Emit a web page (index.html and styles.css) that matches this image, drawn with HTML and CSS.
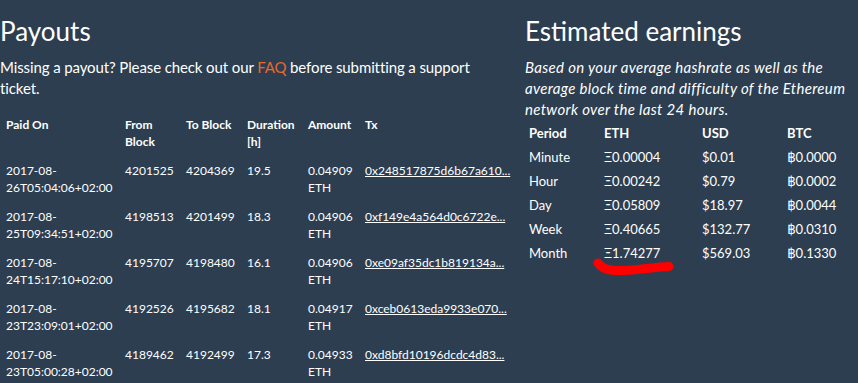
FILE: index.html
```html
<!DOCTYPE html>
<html>
<head>
<meta charset="utf-8">
<link rel="stylesheet" href="styles.css">
</head>
<body>
<div class="page">
  <section class="col col-left">
    <h2 class="title">Payouts</h2>
    <p class="lead">Missing a payout? Please check out our <a class="faq" href="#">FAQ</a> before submitting a support ticket.</p>
    <table class="payouts">
      <colgroup>
        <col class="c-date"><col class="c-num"><col class="c-num"><col class="c-num"><col class="c-amt"><col class="c-tx">
      </colgroup>
      <thead>
        <tr><th>Paid On</th><th>From Block</th><th>To Block</th><th>Duration [h]</th><th>Amount</th><th>Tx</th></tr>
      </thead>
      <tbody>
        <tr><td>2017-08-<wbr>26T05:04:06+02:00</td><td>4201525</td><td>4204369</td><td>19.5</td><td>0.04909 ETH</td><td><a class="tx" href="#">0x248517875d6b67a610...</a></td></tr>
        <tr><td>2017-08-<wbr>25T09:34:51+02:00</td><td>4198513</td><td>4201499</td><td>18.3</td><td>0.04906 ETH</td><td><a class="tx" href="#">0xf149e4a564d0c6722e...</a></td></tr>
        <tr><td>2017-08-<wbr>24T15:17:10+02:00</td><td>4195707</td><td>4198480</td><td>16.1</td><td>0.04906 ETH</td><td><a class="tx" href="#">0xe09af35dc1b819134a...</a></td></tr>
        <tr><td>2017-08-<wbr>23T23:09:01+02:00</td><td>4192526</td><td>4195682</td><td>18.1</td><td>0.04917 ETH</td><td><a class="tx" href="#">0xceb0613eda9933e070...</a></td></tr>
        <tr><td>2017-08-<wbr>23T05:00:28+02:00</td><td>4189462</td><td>4192499</td><td>17.3</td><td>0.04933 ETH</td><td><a class="tx" href="#">0xd8bfd10196dcdc4d83...</a></td></tr>
      </tbody>
    </table>
  </section>
  <section class="col col-right">
    <h2 class="title">Estimated earnings</h2>
    <p class="note">Based on your average hashrate as well as the average block time and difficulty of the Ethereum network over the last 24 hours.</p>
    <div class="earn-wrap">
      <table class="earnings">
        <colgroup><col class="e-per"><col class="e-eth"><col class="e-usd"><col class="e-btc"></colgroup>
        <thead><tr><th>Period</th><th>ETH</th><th>USD</th><th>BTC</th></tr></thead>
        <tbody>
          <tr><td>Minute</td><td>Ξ0.00004</td><td>$0.01</td><td>฿0.0000</td></tr>
          <tr><td>Hour</td><td>Ξ0.00242</td><td>$0.79</td><td>฿0.0002</td></tr>
          <tr><td>Day</td><td>Ξ0.05809</td><td>$18.97</td><td>฿0.0044</td></tr>
          <tr><td>Week</td><td>Ξ0.40665</td><td>$132.77</td><td>฿0.0310</td></tr>
          <tr><td>Month</td><td>Ξ1.74277</td><td>$569.03</td><td>฿0.1330</td></tr>
        </tbody>
      </table>
      <svg class="scribble" width="90" height="26" viewBox="0 0 90 26">
        <path d="M5 7 C 9 13, 16 15, 30 14.5 C 45 14, 62 11, 76 10.5" fill="none" stroke="#ff0000" stroke-width="9" stroke-linecap="round" stroke-linejoin="round"/>
      </svg>
    </div>
  </section>
</div>
</body>
</html>
```
FILE: styles.css
```css
html, body {
  margin: 0;
  padding: 0;
  background: #2c3e50;
}
body {
  font-family: Lato, "Open Sans", "DejaVu Sans", sans-serif;
  color: #ffffff;
  font-size: 15px;
  line-height: 1.42857;
  overflow: hidden;
}
.page {
  display: grid;
  grid-template-columns: 515px 1fr;
  column-gap: 10px;
  padding-top: 17px;
}
.title {
  font-size: 26px;
  font-weight: 400;
  line-height: 1.1;
  margin: 0 0 11px 0;
}
.lead {
  margin: 0 0 11px 0;
  max-width: 485px;
  letter-spacing: -0.11px;
}
.faq {
  color: #e8692c;
  text-decoration: none;
}
.note {
  margin: 0;
  font-style: italic;
  letter-spacing: 0.32px;
}
table {
  border-collapse: collapse;
  border-spacing: 0;
}
.payouts {
  table-layout: fixed;
  width: 515px;
  font-size: 12px;
  line-height: 17px;
}
.c-date { width: 119px; }
.c-num { width: 61px; }
.c-amt { width: 57px; }
.payouts th,
.payouts td {
  text-align: left;
  vertical-align: top;
  padding: 6px 0 6px 6px;
}
.payouts th {
  font-weight: 700;
}
.tx {
  color: #ffffff;
  text-decoration: underline;
  white-space: nowrap;
}
.earn-wrap {
  position: relative;
}
.earnings {
  table-layout: fixed;
  width: 333px;
  font-size: 13px;
  line-height: 18px;
}
.e-per { width: 75px; }
.e-eth { width: 98px; }
.e-usd { width: 85px; }
.earnings th,
.earnings td {
  text-align: left;
  padding: 3px 4px;
}
.earnings th {
  font-weight: 700;
}
.scribble {
  position: absolute;
  left: 68px;
  top: 135px;
}
```
